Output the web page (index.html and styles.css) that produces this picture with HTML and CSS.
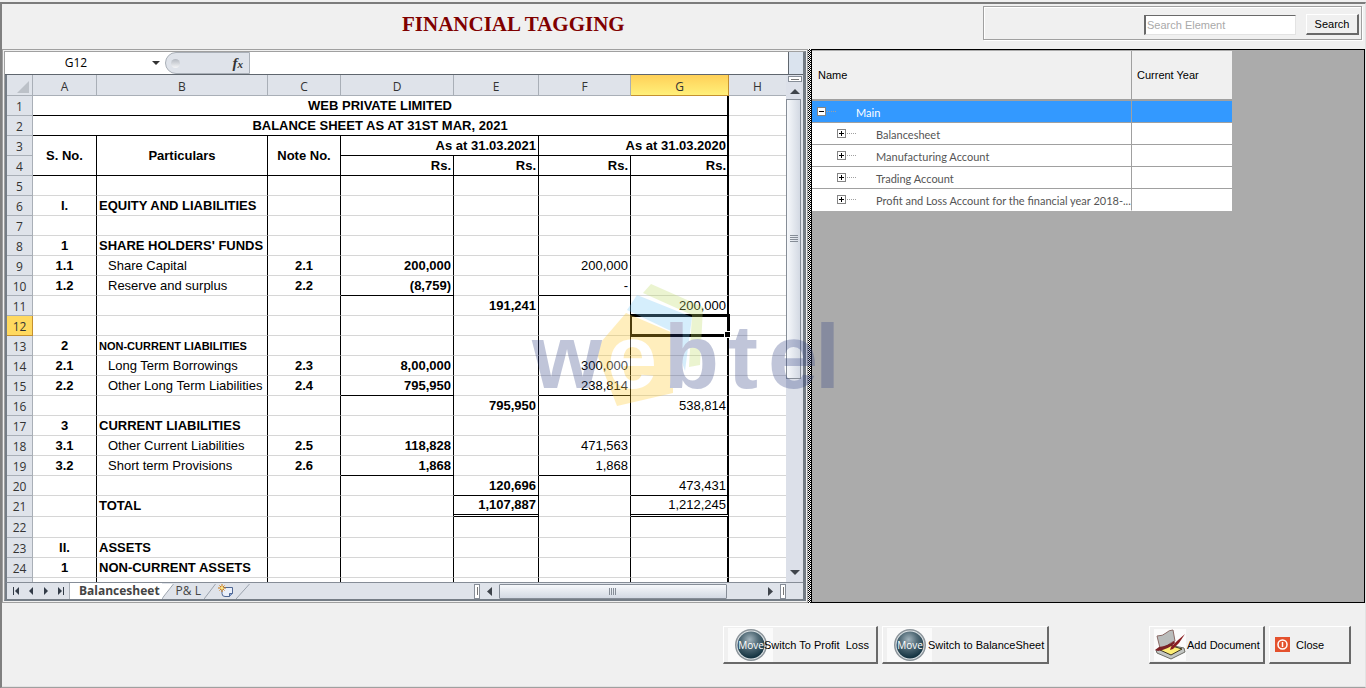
FILE: index.html
```html
<!DOCTYPE html>
<html lang="en">
<head>
<meta charset="utf-8">
<title>Financial Tagging</title>
<link rel="stylesheet" href="styles.css">
</head>
<body>
<div class="window">
  <header class="top">
    <h1>FINANCIAL TAGGING</h1>
    <form class="search">
      <input type="text" class="search-input" placeholder="Search Element" aria-label="Search Element">
      <button type="button" class="btn search-btn">Search</button>
    </form>
  </header>

  <main class="middle">
    <section class="sheet-panel">
      <div class="sheet">
        <div class="formula-bar">
          <input class="name-box" type="text" value="G12" aria-label="Name box">
          <button type="button" class="name-drop" aria-label="Cell names"><svg width="8" height="4" viewBox="0 0 8 4"><path d="M0 0h8L4 4z" fill="#333"/></svg></button>
          <div class="fx-area"><span class="knob"></span><span class="fx">f<small>x</small></span></div>
          <input class="formula" type="text" aria-label="Formula">
          <span class="formula-end"></span>
        </div>
        <div class="grid-area">
          <div class="grid-scroll">
            <table class="grid">
              <colgroup><col class="c-n"><col class="c-a"><col class="c-b"><col class="c-c"><col class="c-d"><col class="c-e"><col class="c-f"><col class="c-g"><col></colgroup>
              <thead><tr><th class="corner"><svg width="12" height="12" viewBox="0 0 12 12"><path d="M12 0v12H0z" fill="#bcc1c8"/></svg></th><th>A</th><th>B</th><th>C</th><th>D</th><th>E</th><th>F</th><th class="active">G</th><th>H</th></tr></thead>
              <tbody>
                <tr><th>1</th><td colspan="7" class="title thick line">WEB PRIVATE LIMITED</td><td class="h"></td></tr>
                <tr><th>2</th><td colspan="7" class="title thick line">BALANCE SHEET AS AT 31ST MAR, 2021</td><td class="h"></td></tr>
                <tr><th>3</th><td rowspan="2" class="title line">S. No.</td><td rowspan="2" class="title line">Particulars</td><td rowspan="2" class="title line">Note No.</td><td colspan="2" class="num b line">As at 31.03.2021</td><td colspan="2" class="num b line thick">As at 31.03.2020</td><td class="h"></td></tr>
                <tr><th>4</th><td class="num b line">Rs.</td><td class="num b line">Rs.</td><td class="num b line">Rs.</td><td class="num b line thick">Rs.</td><td class="h"></td></tr>
                <tr><th>5</th><td></td><td></td><td></td><td></td><td></td><td></td><td class="thick"></td><td class="h"></td></tr>
                <tr><th>6</th><td class="title">I.</td><td class="b">EQUITY AND LIABILITIES</td><td></td><td></td><td></td><td></td><td class="thick"></td><td class="h"></td></tr>
                <tr><th>7</th><td></td><td></td><td></td><td></td><td></td><td></td><td class="thick"></td><td class="h"></td></tr>
                <tr><th>8</th><td class="title">1</td><td class="b">SHARE HOLDERS' FUNDS</td><td></td><td></td><td></td><td></td><td class="thick"></td><td class="h"></td></tr>
                <tr><th>9</th><td class="title">1.1</td><td class="in">Share Capital</td><td class="title">2.1</td><td class="num b">200,000</td><td></td><td class="num">200,000</td><td class="thick"></td><td class="h"></td></tr>
                <tr><th>10</th><td class="title">1.2</td><td class="in">Reserve and surplus</td><td class="title">2.2</td><td class="num b line">(8,759)</td><td></td><td class="num line">-</td><td class="thick"></td><td class="h"></td></tr>
                <tr><th>11</th><td></td><td></td><td></td><td></td><td class="num b">191,241</td><td></td><td class="num thick">200,000</td><td class="h"></td></tr>
                <tr><th class="active">12</th><td></td><td></td><td></td><td></td><td></td><td></td><td class="thick selected"><span class="selection"></span></td><td class="h"></td></tr>
                <tr><th>13</th><td class="title">2</td><td class="b small">NON-CURRENT LIABILITIES</td><td></td><td></td><td></td><td></td><td class="thick"></td><td class="h"></td></tr>
                <tr><th>14</th><td class="title">2.1</td><td class="in">Long Term Borrowings</td><td class="title">2.3</td><td class="num b">8,00,000</td><td></td><td class="num">300,000</td><td class="thick"></td><td class="h"></td></tr>
                <tr><th>15</th><td class="title">2.2</td><td class="in">Other Long Term Liabilities</td><td class="title">2.4</td><td class="num b line">795,950</td><td></td><td class="num line">238,814</td><td class="thick"></td><td class="h"></td></tr>
                <tr><th>16</th><td></td><td></td><td></td><td></td><td class="num b">795,950</td><td></td><td class="num thick">538,814</td><td class="h"></td></tr>
                <tr><th>17</th><td class="title">3</td><td class="b">CURRENT LIABILITIES</td><td></td><td></td><td></td><td></td><td class="thick"></td><td class="h"></td></tr>
                <tr><th>18</th><td class="title">3.1</td><td class="in">Other Current Liabilities</td><td class="title">2.5</td><td class="num b">118,828</td><td></td><td class="num">471,563</td><td class="thick"></td><td class="h"></td></tr>
                <tr><th>19</th><td class="title">3.2</td><td class="in">Short term Provisions</td><td class="title">2.6</td><td class="num b line">1,868</td><td></td><td class="num line">1,868</td><td class="thick"></td><td class="h"></td></tr>
                <tr><th>20</th><td></td><td></td><td></td><td></td><td class="num b line">120,696</td><td></td><td class="num line thick">473,431</td><td class="h"></td></tr>
                <tr class="tall"><th>21</th><td></td><td class="b">TOTAL</td><td></td><td></td><td class="num b double">1,107,887</td><td></td><td class="num double thick">1,212,245</td><td class="h"></td></tr>
                <tr class="tall"><th>22</th><td></td><td></td><td></td><td></td><td></td><td></td><td class="thick"></td><td class="h"></td></tr>
                <tr><th>23</th><td class="title">II.</td><td class="b">ASSETS</td><td></td><td></td><td></td><td></td><td class="thick"></td><td class="h"></td></tr>
                <tr><th>24</th><td class="title">1</td><td class="b">NON-CURRENT ASSETS</td><td></td><td></td><td></td><td></td><td class="thick"></td><td class="h"></td></tr>
                <tr><th></th><td></td><td></td><td></td><td></td><td></td><td></td><td class="thick"></td><td class="h"></td></tr>
              </tbody>
            </table>
          </div>
          <div class="vbar">
            <span class="split-h"></span>
            <svg class="arrow-up" width="10" height="5" viewBox="0 0 10 5"><path d="M5 0l5 5H0z" fill="#3f444b"/></svg>
            <div class="vtrack"><span class="vthumb"><svg width="8" height="8" viewBox="0 0 8 8"><path d="M0 .5h8M0 2.5h8M0 4.5h8M0 6.5h8" stroke="#868d97"/></svg></span></div>
            <svg class="arrow-down" width="10" height="5" viewBox="0 0 10 5"><path d="M0 0h10L5 5z" fill="#3f444b"/></svg>
          </div>
        </div>
        <div class="tab-bar">
          <div class="nav">
            <button type="button" aria-label="First sheet"><svg width="8" height="8" viewBox="0 0 8 8"><path d="M1.500 0v8" stroke="#333c48"/><path d="M7 0v8L3 4z" fill="#333c48"/></svg></button>
            <button type="button" aria-label="Previous sheet"><svg width="8" height="8" viewBox="0 0 8 8"><path d="M6 0v8L2 4z" fill="#333c48"/></svg></button>
            <button type="button" aria-label="Next sheet"><svg width="8" height="8" viewBox="0 0 8 8"><path d="M2 0v8l4-4z" fill="#333c48"/></svg></button>
            <button type="button" aria-label="Last sheet"><svg width="8" height="8" viewBox="0 0 8 8"><path d="M6.500 0v8" stroke="#333c48"/><path d="M1 0v8l4-4z" fill="#333c48"/></svg></button>
          </div>
          <button type="button" class="tab on">Balancesheet</button>
          <svg class="slant" width="12" height="15" viewBox="0 0 12 15"><path d="M0 0h12L0 15z" fill="#fff"/><path d="M11.500 0L2 12l-2 3" fill="none" stroke="#9aa2ad"/></svg>
          <button type="button" class="tab">P&amp; L</button>
          <svg class="slant" width="12" height="15" viewBox="0 0 12 15"><path d="M11.500 0L0 15" fill="none" stroke="#9aa2ad"/></svg>
          <button type="button" class="new-sheet" aria-label="Insert sheet"><svg width="16" height="14" viewBox="0 0 16 14"><path d="M4 3.500h10.500v6l-3 3H7q-3 0-3-3z" fill="#e9effa" stroke="#4f6794"/><path d="M14.500 9.500h-3v3" fill="#8aa5d6" stroke="#4f6794"/><path d="M4 0v8M0 4h8M1.500 1.500l5 5M6.500 1.500l-5 5" stroke="#d17c12"/><circle cx="4" cy="4" r="1.500" fill="#ffe680"/></svg></button>
          <svg class="slant" width="14" height="15" viewBox="0 0 14 15"><path d="M13.500 0L0 15" fill="none" stroke="#9aa2ad"/></svg>
          <div class="hbar">
            <span class="split-v"></span>
            <svg class="harrow" width="5" height="9" viewBox="0 0 5 9"><path d="M5 0v9L0 4.500z" fill="#3f444b"/></svg>
            <div class="htrack"><span class="hthumb"><svg width="8" height="7" viewBox="0 0 8 7"><path d="M.5 0v7M2.500 0v7M4.500 0v7M6.500 0v7" stroke="#868d97"/></svg></span></div>
            <svg class="harrow" width="5" height="9" viewBox="0 0 5 9"><path d="M0 0v9l5-4.500z" fill="#3f444b"/></svg>
            <span class="split-v"></span>
          </div>
        </div>
      </div>
      <svg class="watermark" width="306" height="134" viewBox="0 0 306 134" role="img" aria-label="webtel">
        <path d="M119 8l52 23-3 58-11 2 3-52-49-22z" fill="#bfdc66"/>
        <path d="M105 19l55 22-7 54-14-40-44-21z" fill="#78c8f8"/>
        <path d="M94 37l47 20v60l-56 13-22-57z" fill="#ffca28"/>
        <g class="mark"><text x="0" y="112">w</text><text class="light" x="75" y="112">e</text><text x="132" y="112">b</text><text x="196" y="112">t</text><text x="236" y="112">e</text><text x="283" y="112">l</text></g>
      </svg>
    </section>
    <div class="splitter"></div>
    <section class="tree-panel">
      <table class="tree">
        <colgroup><col class="t-name"><col class="t-year"></colgroup>
        <thead><tr><th>Name</th><th>Current Year</th></tr></thead>
        <tbody>
          <tr class="main"><td><div class="node"><button type="button" class="toggle" aria-label="Collapse"><svg width="7" height="7" viewBox="0 0 7 7"><path d="M1 3.500h5" stroke="#000"/></svg></button><span class="dots"></span><span>Main</span></div></td><td></td></tr>
          <tr><td><div class="node child"><button type="button" class="toggle" aria-label="Expand"><svg width="7" height="7" viewBox="0 0 7 7"><path d="M1 3.500h5M3.500 1v5" stroke="#000"/></svg></button><span class="dots"></span><span>Balancesheet</span></div></td><td></td></tr>
          <tr><td><div class="node child"><button type="button" class="toggle" aria-label="Expand"><svg width="7" height="7" viewBox="0 0 7 7"><path d="M1 3.500h5M3.500 1v5" stroke="#000"/></svg></button><span class="dots"></span><span>Manufacturing Account</span></div></td><td></td></tr>
          <tr><td><div class="node child"><button type="button" class="toggle" aria-label="Expand"><svg width="7" height="7" viewBox="0 0 7 7"><path d="M1 3.500h5M3.500 1v5" stroke="#000"/></svg></button><span class="dots"></span><span>Trading Account</span></div></td><td></td></tr>
          <tr><td><div class="node child"><button type="button" class="toggle" aria-label="Expand"><svg width="7" height="7" viewBox="0 0 7 7"><path d="M1 3.500h5M3.500 1v5" stroke="#000"/></svg></button><span class="dots"></span><span>Profit and Loss Account for the financial year 2018-...</span></div></td><td></td></tr>
        </tbody>
      </table>
    </section>
  </main>

  <footer class="actions">
    <button type="button" class="btn action move tight">
      <svg width="45" height="34" viewBox="0 0 45 34"><defs><radialGradient id="ball" cx="45%" cy="30%" r="70%"><stop offset="0" stop-color="#a3b4bd"/><stop offset=".45" stop-color="#536c78"/><stop offset="1" stop-color="#0f2f3d"/></radialGradient></defs><path d="M0 0h45v34H0z" fill="#fafafa"/><circle cx="23" cy="17" r="16" fill="#8b949a"/><circle cx="23" cy="17" r="14.500" fill="#dfe5e8"/><circle cx="23" cy="17" r="13.500" fill="url(#ball)"/><text x="23" y="21" text-anchor="middle" class="ball-text">Move</text></svg>
      <span>Switch To Profit&nbsp; Loss</span></button>
    <button type="button" class="btn action move">
      <svg width="45" height="34" viewBox="0 0 45 34"><path d="M0 0h45v34H0z" fill="#fafafa"/><circle cx="23" cy="17" r="16" fill="#8b949a"/><circle cx="23" cy="17" r="14.500" fill="#dfe5e8"/><circle cx="23" cy="17" r="13.500" fill="url(#ball)"/><text x="23" y="21" text-anchor="middle" class="ball-text">Move</text></svg>
      <span>Switch to BalanceSheet</span></button>
    <button type="button" class="btn action add">
      <svg width="32" height="32" viewBox="0 0 32 32"><path d="M0 0h32v32H0z" fill="#fbfbfb"/><path d="M3 7q6 0 9-3t7-3l2 11q-4 1-7 4t-8 3z" fill="#b9bcbb" stroke="#8a6a66"/><path d="M2 21l13-5 15 3 1 4-14 7L3 24z" fill="#c3c6c3" stroke="#6d6d66"/><path d="M6 21l9-5 13 4-11 6z" fill="#fdee75" stroke="#3c351d"/><path d="M1 21l4-3q9-1 15-6l1 2q-6 6-17 8z" fill="#7b2226"/><path d="M31 5l-8 7-6 6-1 3 3-1 6-6z" fill="#8a1d20"/></svg>
      <span>Add Document</span></button>
    <button type="button" class="btn action close">
      <svg width="15" height="15" viewBox="0 0 15 15"><path d="M0 0h15v15H0z" fill="#e4512d"/><circle cx="7.500" cy="7.500" r="4.500" fill="none" stroke="#fff" stroke-width="1.500"/><path d="M7.500 5v5" stroke="#fff" stroke-width="1.500"/></svg>
      <span>Close</span></button>
  </footer>
</div>
</body>
</html>
```
FILE: styles.css
```css
* { box-sizing: border-box; }
html, body { height: 100%; margin: 0; }
body { background: #f0f0f0; color: #000; font: 11px/16px "Liberation Sans", Arial, sans-serif; overflow: hidden; padding-top: 2px; }
button, input { font: inherit; color: inherit; margin: 0; padding: 0; border: 0; background: none; border-radius: 0; }
svg { display: block; flex: none; }

.window { height: 100%; display: flex; flex-direction: column; border-top: 2px solid #7c7c7c; border-left: 2px solid #808080; border-right: 1px solid #e3e3e3; border-bottom: 1px solid #a0a0a0; }

/* header */
.top { display: flex; flex: none; height: 45px; align-items: flex-start; justify-content: flex-end; }
.top h1 { flex: 1; margin: 0; padding: 8px 0 0 400px; font: bold 21px/24px "Liberation Serif", "Times New Roman", serif; color: #800000; white-space: nowrap; }
.search { display: flex; align-items: center; justify-content: flex-end; gap: 10px; width: 379px; height: 34px; margin: 2px 3px 0 0; padding: 3px 2px 0 0; border: 1px solid #a0a0a0; box-shadow: 1px 1px 0 #fff, inset 1px 1px 0 #fff; }
.search-input { width: 152px; height: 20px; padding: 0 1px; background: #fff; border: 1px solid #e3e3e3; border-top-color: #696969; border-left: 2px solid #696969; }
.search-input::placeholder { color: #a9a9a9; opacity: 1; }
.btn { background: #f0f0f0; border: 1px solid #fff; border-right: 2px solid #696969; border-bottom: 2px solid #696969; white-space: nowrap; }
.search-btn { width: 53px; height: 21px; }

/* main split */
.middle { flex: 1; min-height: 0; display: flex; }
.sheet-panel { position: relative; flex: 1; min-width: 0; padding: 1px; border: 1px solid #a0a0a0; }
.sheet { height: 100%; display: flex; flex-direction: column; border: 1px solid #a0a0a0; border-right: 3px solid #757d86; border-bottom: 2px solid #757d86; background: #fff; }
.splitter { width: 3px; flex: none; background: repeating-conic-gradient(#000 0 25%, #fff 0 50%) 0 0 / 2px 2px; }
.tree-panel { flex: none; width: 554px; padding-top: 1px; border: 1px solid #000; background: #ababab; }

/* formula bar */
.formula-bar { display: flex; flex: none; height: 23px; border-bottom: 1px solid #5f666e; background: #fff; }
.name-box { width: 142px; text-align: center; font: 12px/16px "Open Sans", sans-serif; }
.name-drop { width: 18px; display: flex; align-items: center; justify-content: center; }
.fx-area { display: flex; align-items: center; justify-content: space-between; width: 85px; padding: 0 6px 0 5px; background: #dfe3ea; border: 1px solid #a9afb7; border-radius: 11px 0 0 11px; }
.knob { width: 9px; height: 9px; border-radius: 50%; background: linear-gradient(#b4b9c1, #f5f6f8); }
.fx { font: italic bold 15px/16px "Liberation Serif", serif; color: #333; }
.fx small { font-size: 11px; }
.formula { flex: 1; min-width: 0; background: #fff; }
.formula-end { width: 15px; background: #dae3ee; border-left: 1px solid #5f666e; }

/* grid */
.grid-area { display: flex; flex: 1; min-height: 0; border-left: 2px solid #757d86; }
.grid-scroll { flex: 1; min-width: 0; overflow: hidden; }
.grid { width: 100%; table-layout: fixed; border-collapse: separate; border-spacing: 0; font-size: 13px; line-height: 16px; }
.c-n { width: 26px; } .c-a { width: 64px; } .c-b { width: 171px; } .c-c { width: 73px; }
.c-d { width: 113px; } .c-e { width: 85px; } .c-f { width: 92px; } .c-g { width: 98px; }
.grid th { height: 20px; padding: 2px 0 0; font: 12px/16px "Open Sans", sans-serif; color: #333; background: #dfe3ea; border-right: 1px solid #a9afb7; border-bottom: 1px solid #a9afb7; }
.grid thead th { height: 21px; padding-top: 3px; }
.grid thead th:last-child { border-right: 0; }
.grid .corner svg { margin-left: 10px; }
.grid .active { background: #ffd95f; border-color: #c4902f; }
.grid thead .active { background: linear-gradient(#ffd058, #fff07a); }
.grid td { height: 20px; padding: 0 2px; border-right: 1px solid #000; border-bottom: 1px solid #d6d6d6; white-space: nowrap; vertical-align: middle; }
.grid .tall td, .grid .tall th { height: 21px; }
.grid .h { border-right: 0; }
.grid .line { border-bottom-color: #000; }
.grid .double { border-bottom: 3px double #000; }
.grid .thick { border-right-width: 2px; }
.title { text-align: center; font-weight: bold; }
.b { font-weight: bold; }
.num { text-align: right; }
.grid .num.thick { padding-right: 1px; }
.grid .in { padding-left: 11px; }
.small { font-size: 11px; }
.selected { position: relative; }
.selection { position: absolute; inset: -2px -3px -2px -1px; border: 3px solid #000; border-left: 2px solid #000; border-right: 1px solid #000; }
.selection::after { content: ""; position: absolute; right: -2px; bottom: -4px; width: 5px; height: 5px; background: #000; border: 1px solid #fff; }

/* scroll bars */
.vbar { display: flex; flex-direction: column; align-items: center; width: 17px; background: #dce0e9; }
.split-h { width: 14px; height: 6px; margin-top: 1px; background: linear-gradient(#777, #777) center / 8px 1px no-repeat #fff; border: 1px solid #868d97; }
.arrow-up { margin: 7px 0 5px; }
.arrow-down { margin: 5px 0 7px; }
.vtrack { flex: 1; width: 100%; }
.vthumb { display: flex; align-items: center; justify-content: center; width: 15px; height: 60%; background: linear-gradient(90deg, #f6f8fb, #d3d9e3); border: 1px solid #868d97; }
.tab-bar { display: flex; flex: none; height: 17px; align-items: center; background: #dfe3ea; border-top: 1px solid #868d97; border-left: 2px solid #757d86; color: #444; font: 12px/14px "Open Sans", sans-serif; }
.nav { display: flex; gap: 7px; height: 100%; width: 63px; padding-left: 5px; align-items: center; border-right: 1px solid #a9afb7; }
.tab { height: 15px; padding: 0 3px 0 2px; line-height: 14px; }
.tab.on { height: 100%; padding: 0 2px 0 9px; background: #fff; font-weight: bold; }
.new-sheet { padding: 0 2px; }
.hbar { display: flex; align-items: center; gap: 7px; width: 312px; height: 100%; margin: 0 17px 0 auto; }
.split-v { width: 6px; height: 15px; background: linear-gradient(#777, #777) center / 1px 8px no-repeat #fff; border: 1px solid #868d97; }
.htrack { flex: 1; height: 15px; }
.hthumb { display: flex; align-items: center; justify-content: center; width: 87%; height: 15px; background: linear-gradient(#f6f8fb, #d3d9e3); border: 1px solid #868d97; border-radius: 1px; }

/* logo laid over the sheet and the tree */
.watermark { position: absolute; left: 529px; top: 226px; z-index: 2; opacity: .3; overflow: visible; pointer-events: none; }
.mark { font: bold 90px "Liberation Sans", Arial, sans-serif; fill: #334384; }
.mark .light { fill: #fff; }

/* tree */
.tree { width: 420px; table-layout: fixed; border-collapse: separate; border-spacing: 0; font: 11px/14px Lato, "Liberation Sans", sans-serif; background: #fff; color: #555; }
.t-name { width: 320px; } .t-year { width: 100px; }
.tree th { height: 50px; padding: 0 6px; font: 11px/14px "Liberation Sans", Arial, sans-serif; text-align: left; color: #000; background: #f0f0f0; border-right: 1px solid #a0a0a0; border-bottom: 2px solid #a0a0a0; }
.tree th:last-child { border-right: 0; padding-left: 5px; }
.tree td { height: 22px; padding: 0; border-right: 1px solid #a0a0a0; border-bottom: 1px solid #a0a0a0; white-space: nowrap; }
.tree td:last-child { border-right: 0; }
.tree tr:last-child td { border-bottom-color: #fff; }
.tree .main td { background: #3399ff; color: #fff; }
.node { display: flex; align-items: center; padding-left: 5px; }
.node > * { flex: none; }
.node.child { padding-left: 25px; }
.toggle { display: flex; width: 9px; height: 9px; background: #fff; border: 1px solid #848484; }
.dots { width: 9px; margin: 0 20px 0 1px; border-top: 1px dotted #a0a0a0; }
.node > span:last-child { padding-top: 2px; }

/* action buttons */
.actions { flex: none; display: flex; gap: 4px; align-items: flex-start; justify-content: flex-end; height: 84px; padding: 23px 14px 0 0; border-bottom: 1px solid #e3e3e3; }
.action { display: flex; align-items: center; height: 38px; }
.move { width: 167px; padding-left: 4px; }
.move.tight { width: 155px; }
.move.tight span { margin-left: -9px; }
.move span { margin-left: -4px; z-index: 1; }
.ball-text { font: 10px "Open Sans", sans-serif; fill: #fff; }
.add { width: 116px; margin-left: 96px; padding-left: 4px; }
.add span { margin-left: 1px; }
.close { width: 82px; padding-left: 5px; gap: 6px; }
```
